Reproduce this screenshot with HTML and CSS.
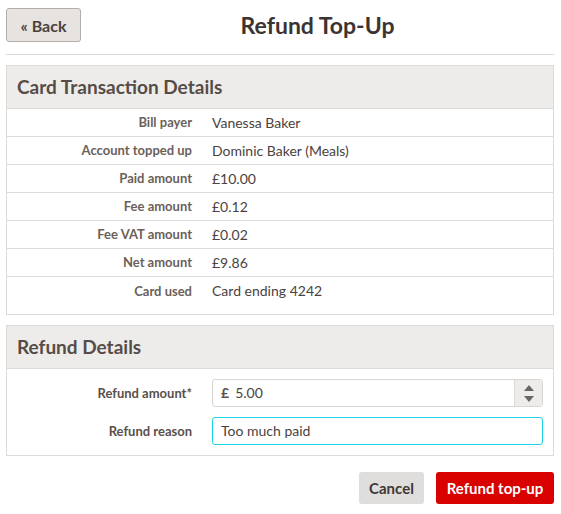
FILE: index.html
```html
<!DOCTYPE html>
<html lang="en">
<head>
    <meta charset="UTF-8">
    <title>Refund Top-Up</title>
    <link rel="stylesheet" href="styles.css">
</head>
<body>
    <div class="page">
        <div class="top-bar">
            <button class="btn btn-back">&laquo; Back</button>
            <h1>Refund Top-Up</h1>
        </div>
        <hr class="divider">

        <section class="panel">
            <h2 class="panel-title">Card Transaction Details</h2>
            <div class="details">
                <div class="row"><span class="label">Bill payer</span><span class="value">Vanessa Baker</span></div>
                <div class="row"><span class="label">Account topped up</span><span class="value">Dominic Baker (Meals)</span></div>
                <div class="row"><span class="label">Paid amount</span><span class="value">&pound;10.00</span></div>
                <div class="row"><span class="label">Fee amount</span><span class="value">&pound;0.12</span></div>
                <div class="row"><span class="label">Fee VAT amount</span><span class="value">&pound;0.02</span></div>
                <div class="row"><span class="label">Net amount</span><span class="value">&pound;9.86</span></div>
                <div class="row"><span class="label">Card used</span><span class="value">Card ending 4242</span></div>
            </div>
        </section>

        <section class="panel">
            <h2 class="panel-title">Refund Details</h2>
            <div class="form-body">
                <div class="form-row">
                    <label class="label" for="amount">Refund amount*</label>
                    <div class="input amount-input">
                        <span class="prefix">&pound;</span>
                        <span class="input-text" id="amount">5.00</span>
                        <span class="spinner">
                            <svg width="12" height="8" viewBox="0 0 12 8"><path d="M1 7 L6 1 L11 7 Z" fill="#6e6560"/></svg>
                            <svg width="12" height="8" viewBox="0 0 12 8"><path d="M1 1 L6 7 L11 1 Z" fill="#6e6560"/></svg>
                        </span>
                    </div>
                </div>
                <div class="form-row">
                    <label class="label" for="reason">Refund reason</label>
                    <div class="input input-focus">
                        <span class="input-text" id="reason">Too much paid</span>
                    </div>
                </div>
            </div>
        </section>

        <div class="actions">
            <button class="btn btn-cancel">Cancel</button>
            <button class="btn btn-primary">Refund top-up</button>
        </div>
    </div>
</body>
</html>
```

FILE: styles.css
```css
body {
    margin: 0;
    font-family: Lato, "Open Sans", sans-serif;
    color: #4a423e;
    background: #ffffff;
}

.page {
    padding: 8px 7px 0 6px;
}

.top-bar {
    display: flex;
    align-items: center;
}

h1 {
    flex: 1;
    margin: 0;
    text-align: center;
    font-size: 23px;
    font-weight: 700;
    color: #3b3431;
}

.btn {
    font-family: inherit;
    font-weight: 700;
    font-size: 15px;
    border: none;
    border-radius: 3px;
    cursor: pointer;
}

.btn-back {
    width: 75px;
    height: 34px;
    background: #e6e3e1;
    border: 1px solid #b4aeab;
    color: #4a423e;
    font-size: 16px;
}

.divider {
    border: none;
    border-top: 1px solid #dcd9d7;
    margin: 12px 0 10px;
}

.panel {
    border: 1px solid #dcd9d7;
    margin-bottom: 10px;
}

.panel-title {
    margin: 0;
    height: 42px;
    line-height: 41px;
    padding: 0 10px;
    background: #eeecea;
    border-bottom: 1px solid #dcd9d7;
    font-size: 19px;
    font-weight: 700;
    color: #564c47;
}

.details {
    padding-bottom: 9px;
}

.row {
    display: flex;
    height: 28px;
    padding-bottom: 1px;
    box-sizing: border-box;
    align-items: center;
    border-bottom: 1px solid #dcd9d7;
    font-size: 14px;
}

.row:last-child {
    border-bottom: none;
}

.label {
    width: 185px;
    flex: none;
    text-align: right;
    font-size: 13px;
    font-weight: 700;
    color: #6b5f59;
}

.value {
    padding-left: 20px;
    color: #4a423e;
}

.form-body {
    padding: 10px 10px 10px 0;
    display: flex;
    flex-direction: column;
    gap: 10px;
}

.form-row {
    display: flex;
    align-items: center;
}

.form-row .label {
    color: #5a504b;
}

.input {
    flex: 1;
    margin-left: 20px;
    height: 28px;
    box-sizing: border-box;
    border: 1px solid #d8d5d3;
    border-radius: 3px;
    display: flex;
    align-items: center;
    font-size: 14px;
    color: #4a423e;
}

.input-text {
    padding-left: 8px;
    padding-bottom: 1px;
}

.input-focus {
    border-color: #1fd3e9;
}

.prefix {
    padding-left: 8px;
    padding-bottom: 1px;
    font-weight: 700;
    color: #5a504b;
}

.prefix + .input-text {
    padding-left: 6px;
    flex: 1;
}

.spinner {
    width: 27px;
    height: 26px;
    background: #eeecea;
    border-left: 1px solid #dcd9d7;
    border-radius: 0 2px 2px 0;
    display: flex;
    flex-direction: column;
    align-items: center;
    justify-content: center;
    gap: 3px;
}

.actions {
    display: flex;
    justify-content: flex-end;
    gap: 12px;
    margin-top: 16px;
}

.btn-cancel {
    width: 65px;
    height: 32px;
    background: #e0dedc;
    color: #3f3835;
}

.btn-primary {
    width: 118px;
    height: 32px;
    background: #d90000;
    color: #ffffff;
}
```
